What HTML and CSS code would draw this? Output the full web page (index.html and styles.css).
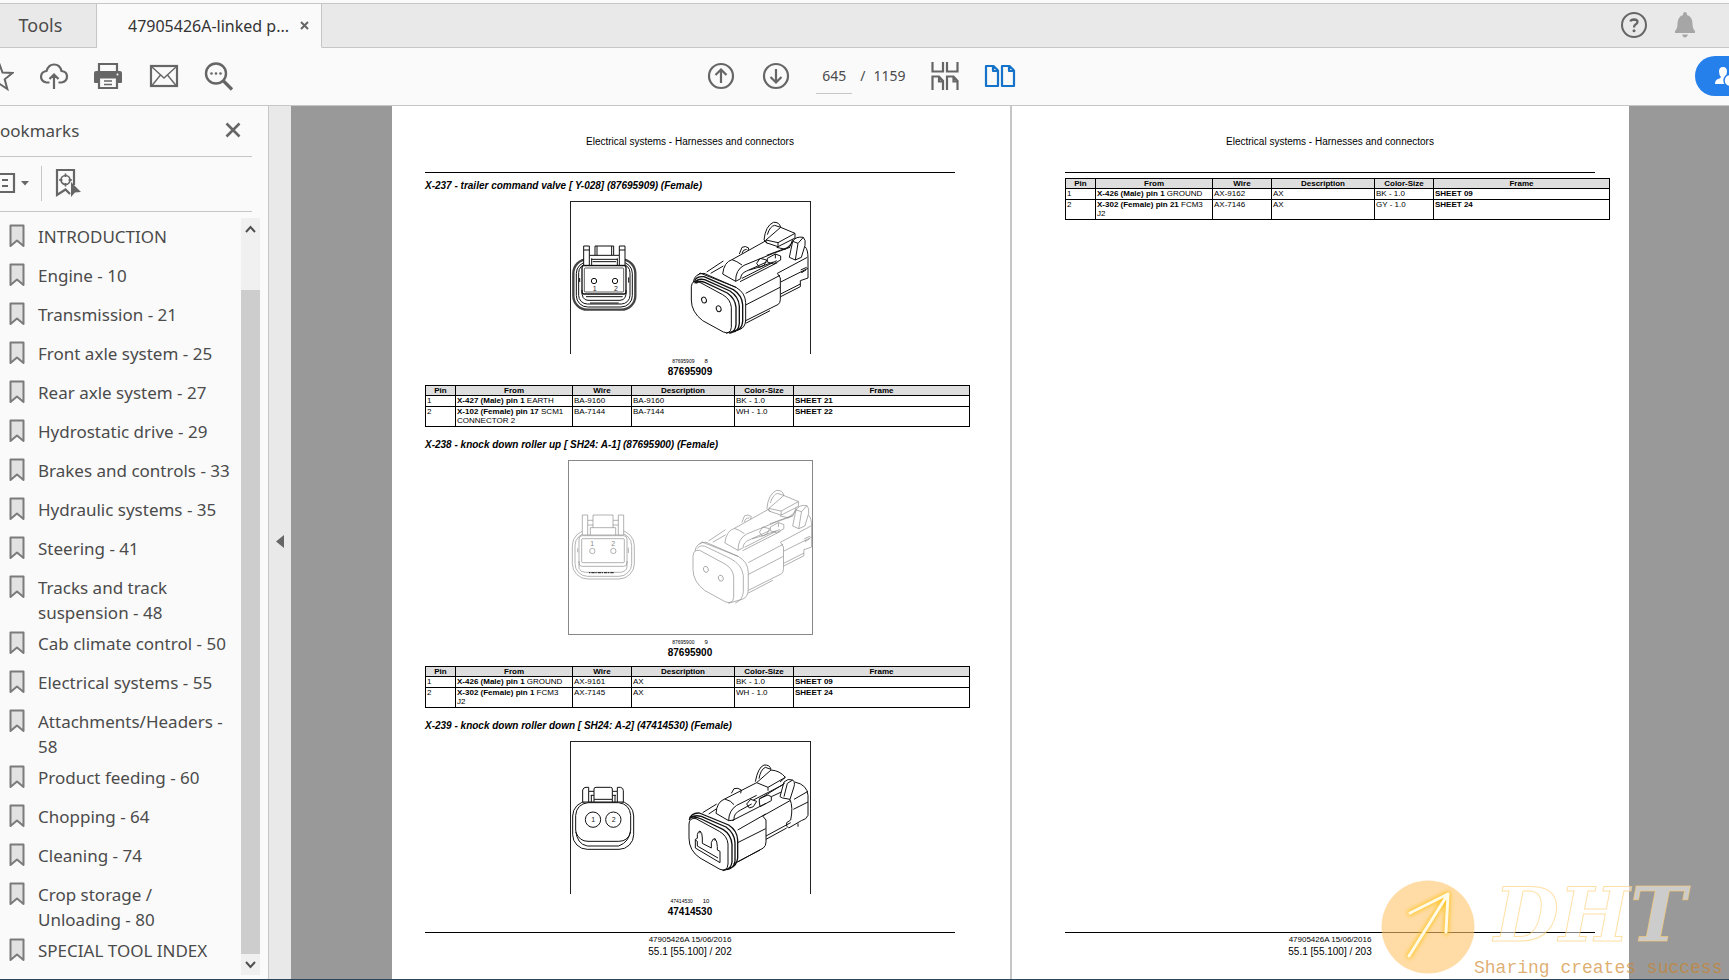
FILE: index.html
```
<!DOCTYPE html>
<html lang="en">
<head>
<meta charset="utf-8">
<title>47905426A-linked</title>
<link rel="stylesheet" href="styles.css">
</head>
<body>
<svg class="defs" aria-hidden="true">
  <symbol id="mark" viewBox="0 0 16 24"><path d="M1.500 1.500H14.500V22L8 16.500L1.500 22Z" fill="#e2e2e2" stroke="#7b7b7b" stroke-width="2" stroke-linejoin="round"/></symbol>
  <symbol id="iso" viewBox="33 36 717 456">
    <path d="M394 290Q396 270 414 274L488 314Q512 328 514 352V412Q512 434 490 426L428 392Q394 366 394 330Z"/>
    <ellipse cx="432" cy="330" rx="7" ry="9" transform="rotate(-20 432 330)"/><ellipse cx="476" cy="356" rx="7" ry="9" transform="rotate(-20 476 356)"/>
    <path d="M400 276Q404 250 432 250L528 292Q556 308 557 338V390Q556 412 540 418L498 430"/>
    <path d="M414 256L420 249L528 292M452 250L490 228M440 246L490 213M488 252Q492 216 516 209Q530 213 546 225M488 252L527 274Q526 240 552 226L640 190M527 274L542 266Q542 250 560 243L620 216M546 265L650 212M516 209L618 152M538 192L546 172Q556 166 566 174L564 182M546 190Q548 178 560 178"/>
    <path d="M590 220L600 205L620 210L612 226L598 232ZM622 205L646 192L662 198V210L640 222L622 216ZM646 192V205M568 240Q600 232 640 216M540 275L652 218M557 310L660 256M557 345L660 292M557 392L655 343Q661 338 661 328V264L652 250L742 202M557 400L630 362"/>
    <path d="M612 150Q616 108 640 97Q658 95 662 112M622 134Q630 108 644 106L662 112M612 150L622 160M618 150L662 112L705 130V144L654 170L618 158ZM654 170V158L705 130M654 158L618 150M650 172L676 178L700 155M620 196L690 170L698 148M640 190L690 172"/>
    <path d="M688 202L698 154Q708 138 730 142Q738 150 735 166L724 202L706 210ZM706 210L714 160L730 142M698 154L714 160M735 170Q744 178 744 205V264L721 272V290L662 320M744 235L662 276M722 240L740 232M724 248L738 240M726 244V248M662 312L721 282"/>
  </symbol>
</svg>
<div class="app">
  <header class="tabs">
    <button class="tab tab-tools">Tools</button>
    <div class="tab tab-open"><span>47905426A-linked p...</span><button class="tab-close" aria-label="Close tab"><svg width="9" height="9" viewBox="0 0 9 9"><path d="M1 1L8 8M8 1L1 8" stroke="#666" stroke-width="2"/></svg></button></div>
    <div class="tab-actions">
      <button aria-label="Help"><svg width="28" height="28" viewBox="0 0 28 28" fill="none" stroke="#666" stroke-width="2"><circle cx="14" cy="14" r="12"/><path d="M10.500 10.500Q11 8.500 14 8.500Q17.500 8.600 17.500 11Q17.500 12.500 15.500 13.500Q14 14.500 14 16.500" stroke-width="2.300"/><circle cx="14" cy="19.800" r="1.500" fill="#666" stroke="none"/></svg></button>
      <button aria-label="Notifications"><svg width="24" height="28" viewBox="0 0 24 28" fill="#a6a6a6"><path d="M12 1Q14 1 14 4Q19 5.500 19.500 12Q19.500 18 22 20V22H2V20Q4.500 18 4.500 12Q5 5.500 10 4Q10 1 12 1ZM9 23.500H15Q14 26.500 12 26.500Q10 26.500 9 23.500Z"/></svg></button>
    </div>
  </header>

  <div class="toolbar">
    <div class="tools">
      <button aria-label="Star"><svg width="30" height="30" viewBox="0 0 30 30" fill="none" stroke="#666" stroke-width="2"><path d="M15 2L18.500 11.500L28.500 12L20.700 18.300L23.300 28L15 22.500L6.700 28L9.300 18.300L1.500 12L11.500 11.500Z"/></svg></button>
      <button aria-label="Upload"><svg width="30" height="30" viewBox="0 0 30 30" fill="none" stroke="#666" stroke-width="2.200"><path d="M10.500 21.500H7.500Q2 20.500 2 15.500Q2.500 10.500 7.500 10Q9.500 3.500 15 3.500Q21 3.500 22.500 10Q28 10.500 28 15.500Q28 20.500 22.500 21.500H19.500M15 28V13.500M10.500 18L15 13.500L19.500 18"/></svg></button>
      <button aria-label="Print"><svg width="30" height="30" viewBox="1 0 30 30"><path d="M6 10V3H24V10" fill="none" stroke="#666" stroke-width="2.200"/><path d="M3 10H27Q29 10 29 12V21Q29 22 28 22H2Q1 22 1 21V12Q1 10 3 10Z" fill="#666"/><path d="M6 16.500H24V27H6Z" fill="#fafafa" stroke="#666" stroke-width="2.200"/><path d="M11 20H19M11 23.500H19" stroke="#666" stroke-width="1.400"/><circle cx="24.500" cy="13.500" r="1" fill="#fafafa"/></svg></button>
      <button aria-label="Email"><svg width="30" height="30" viewBox="0 0 30 30" fill="none" stroke="#666"><rect x="2" y="5" width="26" height="20" stroke-width="2.200"/><path d="M3 6L15 17L27 6M3 24.500L11.500 14M27 24.500L18.500 14" stroke-width="1.400"/></svg></button>
      <button aria-label="Search"><svg width="30" height="30" viewBox="0 0 30 30" fill="none" stroke="#666"><circle cx="12" cy="12.500" r="10" stroke-width="2.400"/><path d="M19.500 20L28 28.500" stroke-width="3.200"/><g fill="#666" stroke="none"><circle cx="7.500" cy="12.500" r="1.300"/><circle cx="12" cy="12.500" r="1.300"/><circle cx="16.500" cy="12.500" r="1.300"/></g></svg></button>
    </div>
    <div class="paging">
      <button aria-label="Previous page"><svg width="28" height="28" viewBox="0 0 28 28" fill="none" stroke="#666" stroke-width="2.200"><circle cx="14" cy="14" r="12"/><path d="M14 21V8M8.500 13L14 7.500L19.500 13"/></svg></button>
      <button class="next" aria-label="Next page"><svg width="28" height="28" viewBox="0 0 28 28" fill="none" stroke="#666" stroke-width="2.200"><circle cx="14" cy="14" r="12"/><path d="M14 7V20M8.500 15L14 20.500L19.500 15"/></svg></button>
      <input class="page-no" aria-label="Page number" value="645"><span class="slash">/</span><span class="total">1159</span>
      <button class="fit" aria-label="Scrolling"><svg width="30" height="30" viewBox="0 0 30 30" fill="none" stroke="#666" stroke-width="2.200"><path d="M2.500 1V10.500H13V1M17 1V10.500H27.500V1M2.500 29V15.500H9L13 20V29M9 15.500V20.500H13M17 29V15.500H23.500L27.500 20V29M23.500 15.500V20.500H27.500"/></svg></button>
      <button aria-label="Two-page view"><svg width="32" height="30" viewBox="0 0 32 30" fill="none" stroke="#1473c8" stroke-width="2.200" stroke-linejoin="round"><path d="M2 5H9.500L14 9.500V25H2ZM9 5V10H14M18 5H25.500L30 9.500V25H18ZM25 5V10H30"/></svg></button>
    </div>
    <div class="share-wrap"><button class="share" aria-label="Share"><svg width="26" height="20" viewBox="0 0 26 20"><path d="M9 1Q13 1 13 5.500Q13 9 11 11Q11.500 12.500 14 13Q17 14 17 18H1Q1 14 4 13Q6.500 12.500 7 11Q5 9 5 5.500Q5 1 9 1Z" fill="#fff"/><circle cx="16" cy="14.500" r="6" fill="#fff" stroke="#2680eb" stroke-width="1.500"/></svg></button></div>
  </div>

  <div class="work">
    <aside class="side">
      <div class="side-head"><h2>ookmarks</h2><button aria-label="Close panel"><svg width="16" height="16" viewBox="0 0 16 16"><path d="M1.500 1.500L14.500 14.500M14.500 1.500L1.500 14.500" stroke="#666" stroke-width="2.600"/></svg></button></div>
      <div class="side-tools">
        <button class="options" aria-label="Options"><svg width="30" height="24" viewBox="0 0 30 24"><path d="M0 3H14V21H0M2 9H8M2 15H8" fill="none" stroke="#666" stroke-width="2.200"/><path d="M21 10H29L25 14.500Z" fill="#666"/></svg></button>
        <button class="locate" aria-label="Find current bookmark"><svg width="28" height="30" viewBox="0 0 28 30"><path d="M16 26L11.500 21.500L3 27V2H20V17" fill="none" stroke="#666" stroke-width="2.200"/><g fill="none" stroke="#666" stroke-width="1.700"><circle cx="11.500" cy="12" r="4.500"/><path d="M11.500 5.500V9M11.500 15V18.500M5 12H8.500M14.500 12H18"/></g><path d="M17 14L27 24L21 24.500L17 29Z" fill="#666"/></svg></button>
      </div>
      <div class="side-body">
        <nav class="marks" aria-label="Bookmarks">
          <a href="#"><svg><use href="#mark"/></svg><span>INTRODUCTION</span></a>
          <a href="#"><svg><use href="#mark"/></svg><span>Engine - 10</span></a>
          <a href="#"><svg><use href="#mark"/></svg><span>Transmission - 21</span></a>
          <a href="#"><svg><use href="#mark"/></svg><span>Front axle system - 25</span></a>
          <a href="#"><svg><use href="#mark"/></svg><span>Rear axle system - 27</span></a>
          <a href="#"><svg><use href="#mark"/></svg><span>Hydrostatic drive - 29</span></a>
          <a href="#"><svg><use href="#mark"/></svg><span>Brakes and controls - 33</span></a>
          <a href="#"><svg><use href="#mark"/></svg><span>Hydraulic systems - 35</span></a>
          <a href="#"><svg><use href="#mark"/></svg><span>Steering - 41</span></a>
          <a href="#"><svg><use href="#mark"/></svg><span>Tracks and track<br>suspension - 48</span></a>
          <a href="#"><svg><use href="#mark"/></svg><span>Cab climate control - 50</span></a>
          <a href="#"><svg><use href="#mark"/></svg><span>Electrical systems - 55</span></a>
          <a href="#"><svg><use href="#mark"/></svg><span>Attachments/Headers -<br>58</span></a>
          <a href="#"><svg><use href="#mark"/></svg><span>Product feeding - 60</span></a>
          <a href="#"><svg><use href="#mark"/></svg><span>Chopping - 64</span></a>
          <a href="#"><svg><use href="#mark"/></svg><span>Cleaning - 74</span></a>
          <a href="#"><svg><use href="#mark"/></svg><span>Crop storage /<br>Unloading - 80</span></a>
          <a href="#"><svg><use href="#mark"/></svg><span>SPECIAL TOOL INDEX</span></a>
        </nav>
        <div class="scroll">
          <button aria-label="Scroll up"><svg width="11" height="8" viewBox="0 0 11 8"><path d="M1 7L5.500 2L10 7" fill="none" stroke="#505050" stroke-width="2"/></svg></button>
          <div class="thumb"></div>
          <button aria-label="Scroll down"><svg width="11" height="8" viewBox="0 0 11 8"><path d="M1 1L5.500 6L10 1" fill="none" stroke="#505050" stroke-width="2"/></svg></button>
        </div>
      </div>
    </aside>
    <button class="collapse" aria-label="Collapse panel"><svg width="8" height="13" viewBox="0 0 8 13"><path d="M8 0V13L0 6.500Z" fill="#666"/></svg></button>

    <main class="reader">
      <article class="sheet sheet-left">
        <p class="running">Electrical systems - Harnesses and connectors</p>
        <hr>
        <h3>X-237 - trailer command valve [ Y-028] (87695909) (Female)</h3>
        <figure>
          <svg class="drawing" viewBox="33 36 717 456" role="img" aria-label="Connector 87695909">
            <g class="ink">
              <rect x="40" y="208" width="186" height="151" rx="42" stroke-width="7" stroke="#444"/>
              <rect x="49" y="216" width="168" height="135" rx="34"/>
              <rect x="56" y="222" width="154" height="120" rx="26"/>
              <path fill="#fff" d="M71 226V168H88V196H105V168H161V196H178V168H195V226Z"/>
              <path d="M71 180H88M178 180H195M88 196V226M178 196V226M95 205V226M172 205V226M105 196H161M111 168V196M155 168V196M95 208H172M98 215H168"/>
              <rect x="66" y="227" width="132" height="85" rx="6" stroke-width="4" fill="#fff"/><rect x="73" y="234" width="118" height="72" rx="3" stroke-width="2"/>
              <path d="M66 300Q64 330 84 331H180Q201 330 198 300M78 320H188M90 339H176M59 264V276M206 262V278"/>
              <circle cx="102" cy="273" r="8"/><circle cx="165" cy="273" r="8"/>
              <use href="#iso" x="33" y="36" width="717" height="456"/>
              <path d="M404 272Q410 258 432 260L520 299Q546 316 548 344V394Q546 418 528 422M404 280Q412 264 434 269L510 303Q536 320 538 348V400Q536 424 518 426M408 280Q418 270 436 278L502 309Q526 326 528 352V404Q526 426 508 430" stroke-width="4"/>
            </g>
            <g class="nums"><text x="98" y="302">1</text><text x="162" y="302">2</text></g>
          </svg>
          <figcaption><small><i>87695909</i><b>8</b></small><strong>87695909</strong></figcaption>
        </figure>
        <table>
          <colgroup><col class="c-pin"><col class="c-from"><col class="c-wire"><col class="c-desc"><col class="c-size"><col></colgroup>
          <thead><tr><th>Pin</th><th>From</th><th>Wire</th><th>Description</th><th>Color-Size</th><th>Frame</th></tr></thead>
          <tbody>
            <tr><td>1</td><td><b>X-427 (Male) pin 1</b> EARTH</td><td>BA-9160</td><td>BA-9160</td><td>BK - 1.0</td><td><b>SHEET 21</b></td></tr>
            <tr><td>2</td><td><b>X-102 (Female) pin 17</b> SCM1<br>CONNECTOR 2</td><td>BA-7144</td><td>BA-7144</td><td>WH - 1.0</td><td><b>SHEET 22</b></td></tr>
          </tbody>
        </table>
        <h3>X-238 - knock down roller up [ SH24: A-1] (87695900) (Female)</h3>
        <figure>
          <svg class="drawing drawing-light" viewBox="0 0 729 519" role="img" aria-label="Connector 87695900">
            <g class="ink pale">
              <rect x="10" y="208" width="186" height="146" rx="46"/><rect x="18" y="216" width="170" height="130" rx="38"/>
              <path fill="#fff" d="M40 222V162H56V178H72V162H132V178H148V162H164V222Z"/>
              <path d="M72 178V200H132V178M56 178V222M148 178V222M64 200V222M140 200V222M72 200H64M132 200H140M56 192H72M132 192H148"/>
              <rect x="30" y="224" width="144" height="92" rx="10" fill="#fff"/><rect x="38" y="233" width="128" height="72" rx="3"/>
              <path d="M30 300V322Q34 334 50 334H154Q172 332 174 318V300M26 262V274M178 260V276"/>
              <path d="M60 335H136" stroke="#333" stroke-dasharray="4 3 10 2" stroke-width="4"/>
              <circle cx="70" cy="270" r="8"/><circle cx="133" cy="270" r="8"/>
              <g transform="translate(5 26)">
                <use href="#iso" x="0" y="0" width="729" height="464"/>
                <path d="M380 236Q390 222 412 234L478 266Q514 284 518 318V366Q516 392 494 400"/>
              </g>
            </g>
            <g class="nums pale-nums"><text x="64" y="255">1</text><text x="127" y="255">2</text></g>
          </svg>
          <figcaption><small><i>87695900</i><b>9</b></small><strong>87695900</strong></figcaption>
        </figure>
        <table>
          <colgroup><col class="c-pin"><col class="c-from"><col class="c-wire"><col class="c-desc"><col class="c-size"><col></colgroup>
          <thead><tr><th>Pin</th><th>From</th><th>Wire</th><th>Description</th><th>Color-Size</th><th>Frame</th></tr></thead>
          <tbody>
            <tr><td>1</td><td><b>X-426 (Male) pin 1</b> GROUND</td><td>AX-9161</td><td>AX</td><td>BK - 1.0</td><td><b>SHEET 09</b></td></tr>
            <tr><td>2</td><td><b>X-302 (Female) pin 1</b> FCM3<br>J2</td><td>AX-7145</td><td>AX</td><td>WH - 1.0</td><td><b>SHEET 24</b></td></tr>
          </tbody>
        </table>
        <h3>X-239 - knock down roller down [ SH24: A-2] (47414530) (Female)</h3>
        <figure>
          <svg class="drawing" viewBox="33 36 717 456" role="img" aria-label="Connector 47414530">
            <g class="ink">
              <rect x="38" y="214" width="183" height="144" rx="44"/>
              <path d="M47 300V256Q50 222 84 218H176Q209 222 212 256V300Q208 336 176 348H82Q50 342 47 300M47 306Q58 334 84 334H176Q204 334 212 306"/>
              <path fill="#fff" d="M68 216V180Q70 172 78 172H86V184H102V177Q102 172 108 172H152Q157 172 157 177V184H172V172H182Q190 174 190 182V216Z"/>
              <path d="M86 184V216M172 184V216M102 184V208H157V184M92 196H102M157 196H168M94 196V216M165 196V216M102 208V216M157 208V216"/>
              <circle cx="99" cy="269" r="23"/><circle cx="160" cy="269" r="23"/>
              <path d="M387 282Q388 262 408 266L478 304Q502 318 504 342V402Q502 426 480 418L420 384Q387 362 387 324Z"/>
              <path d="M388 270Q392 248 418 249L506 285Q532 302 533 330V384Q530 408 512 414L488 422M392 264Q402 254 424 259L498 291Q524 310 525 338V392Q524 412 502 419M394 262Q408 260 424 267L490 299Q514 314 516 344V396Q514 416 494 420" stroke-width="4"/>
              <path d="M406 354V328L412 325V314Q414 304 420 303Q427 308 427 324V340L454 354V338Q458 324 465 326Q472 334 472 350V360L480 364V398L406 354M406 330L412 334V348L474 384M420 303V310M465 326V332"/>
              <path d="M428 248L470 222M446 252L470 236M468 250Q470 216 494 207Q514 212 522 224M468 250L506 272Q506 242 530 226L590 196M506 272L522 270Q520 250 542 240L575 222M516 272L618 220M494 207L590 158M514 190L522 176Q534 172 544 180L542 190M560 222L572 208L590 214L580 230L568 234ZM598 216V206L624 195L634 200V212L600 230Z"/>
              <path d="M586 155Q594 112 612 105Q630 104 633 118M597 146Q602 118 616 112L633 118M590 158L633 120Q660 122 676 142L660 156M590 158L624 172L676 142M624 172V182M634 200L664 186M600 206L674 160M580 210L670 164M660 200L672 156Q684 144 698 150Q706 156 702 170L690 208L668 204ZM672 200L682 160L698 150M704 156Q742 164 744 196V256Q740 268 724 272L686 294L680 288V278L692 270Q700 232 690 208M702 208L744 184M714 290V280M700 238L744 216"/>
              <path d="M533 300L617 252M533 338L617 296M533 396L610 354Q618 348 618 336V270L608 258L690 212M618 318L692 278M618 328L680 294M520 402L600 360"/>
            </g>
            <g class="nums"><text x="94" y="276">1</text><text x="155" y="276">2</text></g>
          </svg>
          <figcaption><small><i>47414530</i><b>10</b></small><strong>47414530</strong></figcaption>
        </figure>
        <footer><hr><p class="stamp">47905426A 15/06/2016</p><p class="folio">55.1 [55.100] / 202</p></footer>
      </article>
      <article class="sheet sheet-right">
        <p class="running">Electrical systems - Harnesses and connectors</p>
        <hr>
        <table class="table-top">
          <colgroup><col class="c-pin"><col class="c-from"><col class="c-wire"><col class="c-desc"><col class="c-size"><col></colgroup>
          <thead><tr><th>Pin</th><th>From</th><th>Wire</th><th>Description</th><th>Color-Size</th><th>Frame</th></tr></thead>
          <tbody>
            <tr><td>1</td><td><b>X-426 (Male) pin 1</b> GROUND</td><td>AX-9162</td><td>AX</td><td>BK - 1.0</td><td><b>SHEET 09</b></td></tr>
            <tr><td>2</td><td><b>X-302 (Female) pin 21</b> FCM3<br>J2</td><td>AX-7146</td><td>AX</td><td>GY - 1.0</td><td><b>SHEET 24</b></td></tr>
          </tbody>
        </table>
        <footer><hr><p class="stamp">47905426A 15/06/2016</p><p class="folio">55.1 [55.100] / 203</p></footer>
      </article>
    </main>
  </div>
  <div class="brand">
    <svg class="brand-disc" width="94" height="94" viewBox="0 0 94 94" aria-hidden="true"><circle cx="47" cy="47" r="46.500" fill="#ffc46a" fill-opacity=".6"/><g fill="none" stroke-linecap="round" stroke-linejoin="round"><path class="glow" d="M28 76L67 14M29 33L67 14L65 52" stroke="#ffc420" stroke-width="5"/><path d="M28 76L67 14M29 33L67 14L65 52" stroke="#fffbe6" stroke-width="3"/></g></svg>
    <span class="brand-name">DHT</span>
    <span class="brand-line">Sharing creates success</span>
  </div>
</div>
</body>
</html>
```

FILE: styles.css
```
* { box-sizing: border-box; }
body { margin: 0; overflow: hidden; font-family: "Noto Sans", "Open Sans", sans-serif; color: #4b4b4b; background: #fafafa; }
button { padding: 0; border: 0; background: none; font: inherit; color: inherit; display: flex; align-items: center; justify-content: center; }
p, h2, h3, figure { margin: 0; }
svg { display: block; flex: none; }
.defs { position: absolute; width: 0; height: 0; }
.app { position: relative; display: flex; flex-direction: column; height: 100vh; padding-top: 3px; border-bottom: 1px solid #27465f; overflow: hidden; }

.tabs { display: flex; height: 45px; flex: none; background: #e9e9e9; border-top: 1px solid #c6c6c6; }
.tab { border-bottom: 1px solid #c6c6c6; border-right: 1px solid #c6c6c6; padding-bottom: 2px; }
.tab-tools { width: 97px; padding-right: 15px; font-size: 18px; }
.tab-open { display: flex; align-items: center; justify-content: flex-end; gap: 11px; width: 225px; padding-right: 12px; padding-bottom: 0; background: #fafafa; border-bottom-color: #fafafa; font-size: 16px; color: #333; }
.tab-actions { flex: 1; display: flex; align-items: center; justify-content: flex-end; gap: 25px; padding-right: 32px; padding-bottom: 2px; border-bottom: 1px solid #c6c6c6; }

.toolbar { display: grid; grid-template-columns: 1fr auto 1fr; align-items: center; height: 58px; flex: none; padding-bottom: 2px; border-bottom: 1px solid #c6c6c6; }
.tools { display: flex; gap: 25px; margin-left: -16px; }
.paging { display: flex; align-items: center; margin-right: 6px; font-size: 14px; }
.next { margin-left: 27px; }
.page-no { width: 36px; height: 36px; margin-left: 26px; padding: 0; border: 0; border-bottom: 1px solid #c6c6c6; background: none; font: inherit; color: inherit; text-align: center; }
.slash { margin: 0 8px; }
.fit { margin: 0 24px; }
.share-wrap { display: flex; justify-content: flex-end; overflow: hidden; }
.share { width: 34px; height: 40px; padding-left: 19px; justify-content: flex-start; border-radius: 20px 0 0 20px; background: #2680eb; overflow: hidden; }

.work { flex: 1; min-height: 0; display: flex; }
.side { display: flex; flex-direction: column; width: 269px; flex: none; border-right: 1px solid #c6c6c6; }
.side-head { display: flex; align-items: center; justify-content: space-between; height: 51px; flex: none; margin-right: 16px; padding: 0 11px 2px 0; border-bottom: 1px solid #c6c6c6; }
.side-head h2 { font-size: 17px; font-weight: 400; }
.side-tools { display: flex; align-items: center; height: 55px; flex: none; margin-right: 16px; padding-bottom: 2px; border-bottom: 1px solid #c6c6c6; }
.options { width: 42px; height: 35px; justify-content: flex-start; border-right: 1px solid #c6c6c6; }
.locate { margin-left: 12px; }
.side-body { flex: 1; min-height: 0; display: flex; justify-content: space-between; padding: 6px 8px 4px 0; }
.marks { padding: 3px 0 0 9px; }
.marks a { display: flex; gap: 13px; min-height: 39px; padding: 3px 0; font-size: 17px; line-height: 25px; color: #4b4b4b; text-decoration: none; white-space: nowrap; }
.marks svg { width: 16px; height: 24px; }
.scroll { display: flex; flex-direction: column; width: 19px; flex: none; background: #f0f0f0; }
.scroll button { height: 21px; }
.thumb { flex: 1; margin-top: 51px; background: #cdcdcd; }
.collapse { width: 22px; flex: none; background: #e9e9e9; padding-bottom: 2px; }

.reader { flex: 1; display: flex; justify-content: center; padding-left: 1px; background: #999; font-family: "Liberation Sans", Arial, sans-serif; color: #000; overflow: hidden; }
.sheet { flex: 0 1 618px; display: flex; flex-direction: column; background: #fff; padding-top: 30px; padding-bottom: 21px; font-size: 10px; line-height: 12px; }
.sheet-left { padding-left: 33px; padding-right: 55px; }
.sheet-right { flex-basis: 619px; border-left: 2px solid #c6c6c6; padding-left: 53px; padding-right: 34px; }
.sheet hr { width: 100%; height: 1px; margin: 0; border: 0; background: #000; }
.running { text-align: center; margin-bottom: 24px; }
.sheet h3 { margin: 7px 0 9px; font-size: 10px; font-style: italic; white-space: nowrap; }
figure { display: flex; flex-direction: column; align-items: center; }
.drawing { width: 241px; height: 153px; border: 1px solid #222; border-bottom: 0; }
.drawing-light { width: 245px; height: 175px; border: 1px solid #888; }
.ink { fill: none; stroke: #111; stroke-width: 3; stroke-linejoin: round; }
.pale { stroke: #8c8c8c; stroke-width: 2; }
.nums { font-size: 21px; fill: #222; }
.pale-nums { fill: #888; }
figcaption { display: flex; flex-direction: column; align-items: center; padding-top: 3px; }
figcaption small { display: flex; gap: 10px; font-size: 6px; line-height: 9px; }
figcaption b { font-weight: 400; }
figcaption i { font-size: 5px; font-style: normal; }
figcaption strong { font-size: 10px; }
.sheet table { width: calc(100% + 15px); margin: 7px 0 5px; table-layout: fixed; border-collapse: collapse; font-size: 8px; line-height: 9px; }
.sheet .table-top { margin-top: 5px; }
.sheet th, .sheet td { border: 1px solid #000; padding: 0 1px; text-align: left; vertical-align: top; white-space: nowrap; }
.sheet th { background: #dedede; text-align: center; }
.sheet td { padding: 0 1px 1px; }
.c-pin { width: 30px; }
.c-from { width: 117px; }
.c-wire, .c-size { width: 59px; }
.c-desc { width: 103px; }
.sheet footer { margin-top: auto; text-align: center; }
.stamp { font-size: 8px; margin-top: 1px; }

.brand { position: absolute; right: 0; bottom: 0; width: 348px; height: 100px; }
.brand-disc { position: absolute; left: 0; top: 1px; }
.glow { filter: blur(2px); }
.brand-name { position: absolute; left: 113px; top: -9px; font: italic bold 75px/90px "DejaVu Serif", serif; color: rgba(255, 255, 255, .5); -webkit-text-stroke: 1px rgba(255, 205, 110, .6); }
.brand-line { position: absolute; left: 93px; bottom: 1px; font: 18px/20px "Liberation Mono", monospace; color: rgba(205, 130, 30, .65); white-space: nowrap; }
```
